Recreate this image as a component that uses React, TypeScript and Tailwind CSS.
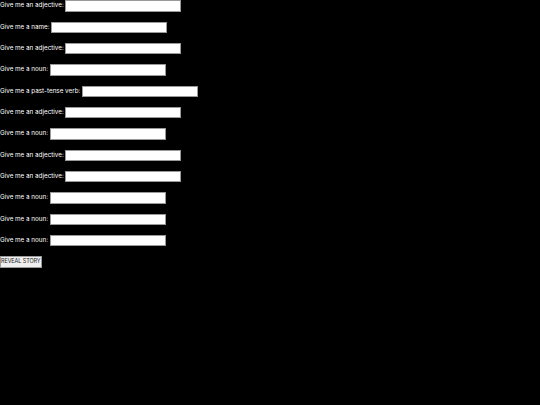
const prompts = [
  "Give me an adjective:",
  "Give me a name:",
  "Give me an adjective:",
  "Give me a noun:",
  "Give me a past-tense verb:",
  "Give me an adjective:",
  "Give me a noun:",
  "Give me an adjective:",
  "Give me an adjective:",
  "Give me a noun:",
  "Give me a noun:",
  "Give me a noun:",
];

export default function App() {
  return (
    <div className="min-h-[405px] w-full bg-black pt-[0.3px] text-white font-['Inter','Liberation_Sans',sans-serif] text-[6.3px]">
      <div className="flex flex-col gap-[9.83px]">
        {prompts.map((p, i) => (
          <div key={i} className="flex h-[11.5px] items-center">
            <span className="mr-[1.5px] whitespace-nowrap">{p}</span>
            <input
              type="text"
              className="h-[11.5px] w-[116px] border border-[#9a9a9a] bg-white text-black"
            />
          </div>
        ))}
        <div className="flex h-[11.5px]">
          <button className="flex h-[11.5px] w-[41.5px] items-center justify-center border border-[#9a9a9a] bg-[#efefef] text-[5.5px] leading-none tracking-[-0.1px] text-[#222] whitespace-nowrap">
            REVEAL STORY
          </button>
        </div>
      </div>
    </div>
  );
}
